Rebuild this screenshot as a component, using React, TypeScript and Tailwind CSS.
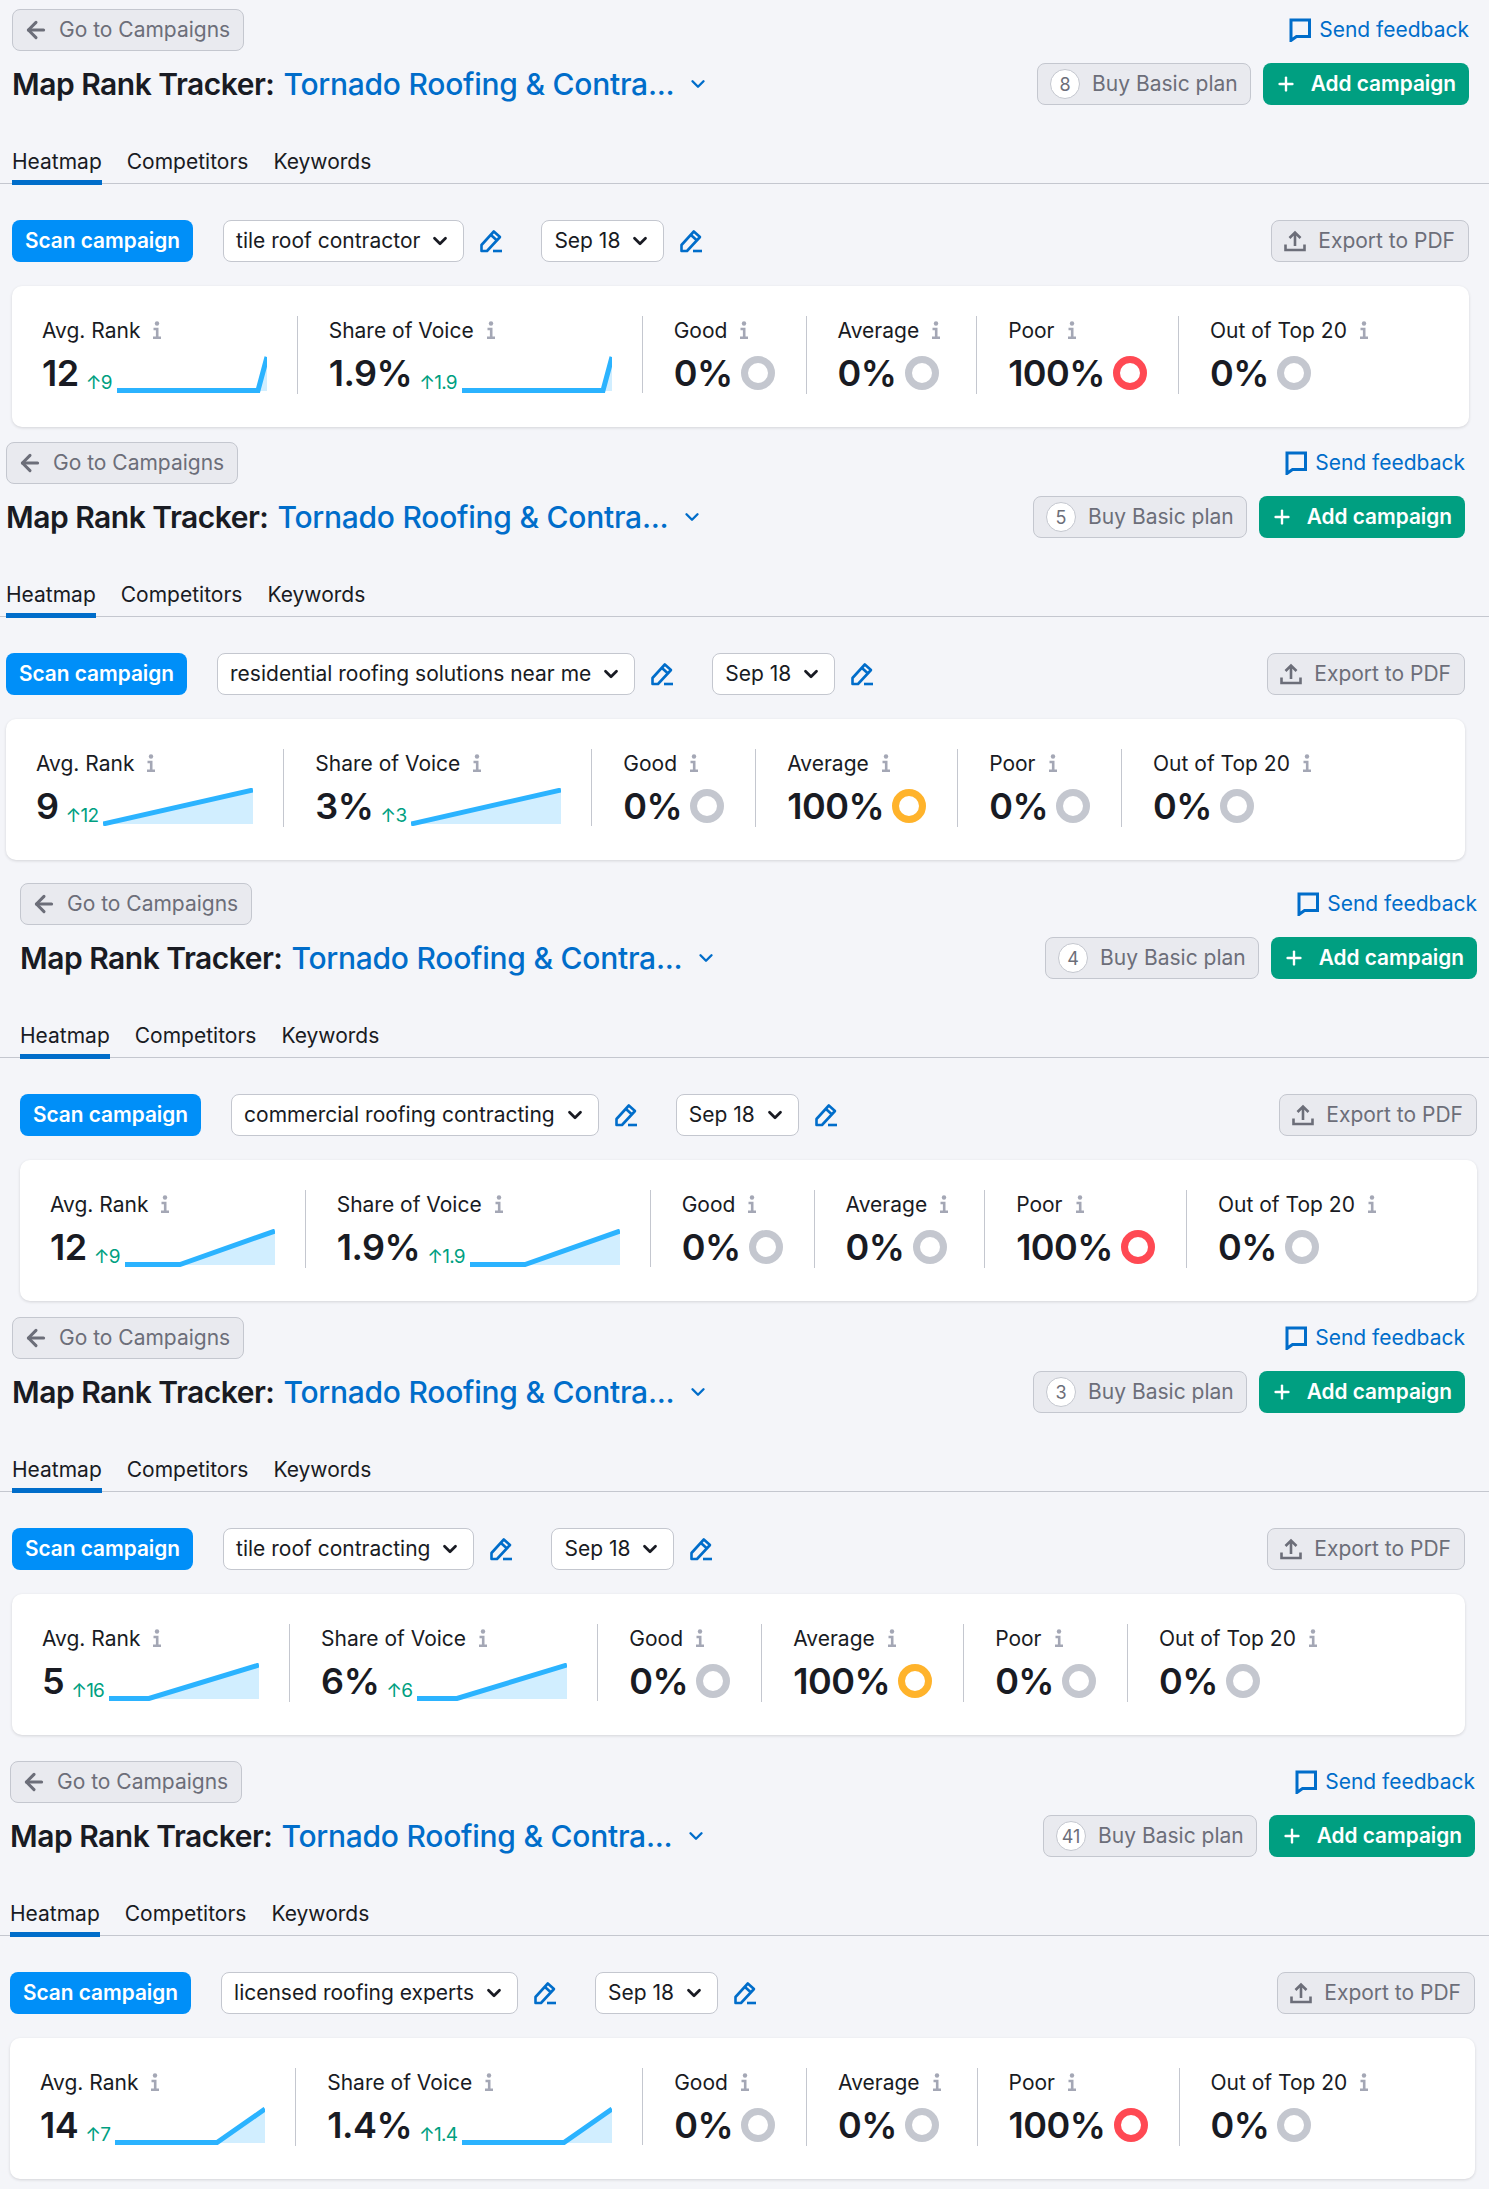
import { ArrowLeft, ChevronDown, Plus } from "lucide-react"

type Metric = { label: string; value: string; tone: "grey" | "red" | "orange" }

type Section = {
  gap: string
  row: string
  tail: string
  count: string
  keyword: string
  rank: string
  rankDelta: string
  share: string
  shareDelta: string
  flatTo: number
  metrics: Metric[]
}

const poorMetrics: Metric[] = [
  { label: "Good", value: "0%", tone: "grey" },
  { label: "Average", value: "0%", tone: "grey" },
  { label: "Poor", value: "100%", tone: "red" },
  { label: "Out of Top 20", value: "0%", tone: "grey" },
]

const averageMetrics: Metric[] = [
  { label: "Good", value: "0%", tone: "grey" },
  { label: "Average", value: "100%", tone: "orange" },
  { label: "Poor", value: "0%", tone: "grey" },
  { label: "Out of Top 20", value: "0%", tone: "grey" },
]

const sections: Section[] = [
  { gap: "pt-[9px]", row: "pl-[12px] pr-[20px]", tail: "ml-[12px] mr-[20px]", count: "8", keyword: "tile roof contractor", rank: "12", rankDelta: "9", share: "1.9%", shareDelta: "1.9", flatTo: 141, metrics: poorMetrics },
  { gap: "pt-[15px]", row: "pl-[6px] pr-[24px]", tail: "ml-[6px] mr-[24px]", count: "5", keyword: "residential roofing solutions near me", rank: "9", rankDelta: "12", share: "3%", shareDelta: "3", flatTo: 0, metrics: averageMetrics },
  { gap: "pt-[23px]", row: "pl-[20px] pr-[12px]", tail: "ml-[20px] mr-[12px]", count: "4", keyword: "commercial roofing contracting", rank: "12", rankDelta: "9", share: "1.9%", shareDelta: "1.9", flatTo: 55, metrics: poorMetrics },
  { gap: "pt-[16px]", row: "pl-[12px] pr-[24px]", tail: "ml-[12px] mr-[24px]", count: "3", keyword: "tile roof contracting", rank: "5", rankDelta: "16", share: "6%", shareDelta: "6", flatTo: 40, metrics: averageMetrics },
  { gap: "pt-[26px]", row: "pl-[10px] pr-[14px]", tail: "ml-[10px] mr-[14px]", count: "41", keyword: "licensed roofing experts", rank: "14", rankDelta: "7", share: "1.4%", shareDelta: "1.4", flatTo: 102, metrics: poorMetrics },
]

function InfoIcon() {
  return (
    <svg width="10" height="19" viewBox="0 0 10 19" className="mr-[4px] shrink-0">
      <circle cx="5" cy="2.5" r="2.2" fill="#a4a7b5" />
      <path d="M1.5 8H5.2V16.5M1 16.8H9" fill="none" stroke="#a4a7b5" strokeWidth="2.6" />
    </svg>
  )
}

function PencilIcon() {
  return (
    <svg width="24" height="24" viewBox="0 0 24 24" fill="none" stroke="#006dca" strokeWidth="2.6">
      <path d="M2.5 22V16L14.8 2.5L21 8L8 22Z" strokeLinejoin="round" />
      <path d="M12 6L18 11.5" />
      <path d="M14 22H23" />
    </svg>
  )
}

function FeedbackIcon() {
  return (
    <svg width="22" height="24" viewBox="0 0 22 24" fill="none" stroke="#006dca" strokeWidth="3">
      <path d="M2 2H20.5V18.5H7.5L2 22.5Z" strokeLinejoin="miter" />
    </svg>
  )
}

function ExportIcon() {
  return (
    <svg width="22" height="22" viewBox="0 0 22 22" fill="none" stroke="#6c6e79" strokeWidth="2.6">
      <path d="M11 16V3M5.5 8L11 2.5L16.5 8" />
      <path d="M1.5 14.5V20H20.5V14.5" />
    </svg>
  )
}

function Sparkline({ flatTo }: { flatTo: number }) {
  const line = flatTo > 0 ? `0,35.5 ${flatTo},35.5 150,2` : "0,36 150,2"
  return (
    <svg width="150" height="38" viewBox="0 0 150 38" className="shrink-0">
      <polygon points={`${flatTo},36 150,2 150,36`} fill="#d1eeff" />
      <polyline points={line} fill="none" stroke="#2bb3ff" strokeWidth="5" />
    </svg>
  )
}

function MetricLabel({ label }: { label: string }) {
  return (
    <div className="flex h-[29px] items-center gap-[12px] text-[21px] leading-[28px] text-[#191b23]">
      {label}
      <InfoIcon />
    </div>
  )
}

function TrendCell({ label, value, delta, flatTo }: { label: string; value: string; delta: string; flatTo: number }) {
  return (
    <div className="border-r border-[#c4c7cf] pr-[30px]">
      <MetricLabel label={label} />
      <div className="mt-[10px] flex h-[38px] items-center">
        <span className="-mt-[2px] text-[36px] font-semibold leading-[38px] tracking-[-0.5px] text-[#191b23]">{value}</span>
        <span className="ml-[7px] mr-[5px] mt-[18px] text-[19px] leading-[20px] tracking-[-0.8px] text-[#009f81]">↑{delta}</span>
        <Sparkline flatTo={flatTo} />
      </div>
    </div>
  )
}

const ringColors = {
  grey: "border-[#c4c7cf]",
  red: "border-[#ff4953]",
  orange: "border-[#ffb32b]",
}

function RingCell({ metric, last }: { metric: Metric; last: boolean }) {
  return (
    <div className={last ? "pl-[31px]" : "border-r border-[#c4c7cf] px-[31px]"}>
      <MetricLabel label={metric.label} />
      <div className="mt-[10px] flex h-[38px] items-center gap-[8px]">
        <span className="-mt-[2px] text-[36px] font-semibold leading-[38px] tracking-[-0.5px] text-[#191b23]">{metric.value}</span>
        <span className={`-mt-[2px] h-[34px] w-[34px] rounded-full border-[7px] ${ringColors[metric.tone]}`} />
      </div>
    </div>
  )
}

function GreyButton({ children }: { children: React.ReactNode }) {
  return (
    <div className="flex h-[42px] items-center rounded-[8px] border border-[#c4c7cf] bg-[#e9eaef] text-[21px] text-[#6c6e79]">
      {children}
    </div>
  )
}

function Select({ text }: { text: string }) {
  return (
    <div className="flex h-[42px] items-center gap-[9px] rounded-[8px] border border-[#c4c7cf] bg-white pl-[12px] pr-[12px] text-[21px] text-[#191b23]">
      {text}
      <ChevronDown size={22} strokeWidth={3} />
    </div>
  )
}

function CampaignSection({ s }: { s: Section }) {
  return (
    <section className={s.gap}>
      <div className={`flex items-center justify-between ${s.row}`}>
        <GreyButton>
          <div className="flex items-center gap-[10px] pl-[10px] pr-[13px]">
            <ArrowLeft size={26} strokeWidth={2.8} />
            Go to Campaigns
          </div>
        </GreyButton>
        <div className="flex items-center gap-[8px] text-[21px] text-[#006dca]">
          <FeedbackIcon />
          Send feedback
        </div>
      </div>

      <div className={`mt-[12px] flex h-[42px] items-center justify-between ${s.row}`}>
        <div className="flex items-center text-[30px] font-semibold tracking-[-0.5px] text-[#191b23]">
          Map Rank Tracker:
          <span className="ml-[9px] font-medium tracking-[-0.25px] text-[#006dca]">Tornado Roofing &amp; Contra...</span>
          <ChevronDown size={22} strokeWidth={2.6} className="ml-[13px] text-[#006dca]" />
        </div>
        <div className="flex items-center gap-[12px]">
          <GreyButton>
            <div className="flex items-center gap-[12px] pl-[12px] pr-[12px]">
              <span className="flex h-[30px] w-[30px] items-center justify-center rounded-full border border-[#c4c7cf] bg-white text-[18px]">
                {s.count}
              </span>
              Buy Basic plan
            </div>
          </GreyButton>
          <div className="flex h-[42px] items-center gap-[14px] rounded-[8px] bg-[#009f81] pl-[12px] pr-[13px] text-[20.8px] font-semibold text-white">
            <Plus size={22} strokeWidth={2.6} />
            Add campaign
          </div>
        </div>
      </div>

      <div className={`mt-[28px] flex h-[51px] items-end gap-[25px] border-b border-[#c4c7cf] text-[21px] text-[#191b23] ${s.row}`}>
        <div className="-mb-[2px] h-[48px] border-b-[5px] border-[#006dca] pt-[9px]">Heatmap</div>
        <div className="h-[46px] pt-[9px]">Competitors</div>
        <div className="h-[46px] pt-[9px]">Keywords</div>
      </div>

      <div className={`mt-[36px] flex items-center ${s.row}`}>
        <div className="flex h-[42px] items-center rounded-[8px] bg-[#008ff8] px-[13px] text-[20.8px] font-semibold text-white">
          Scan campaign
        </div>
        <div className="ml-[30px]">
          <Select text={s.keyword} />
        </div>
        <div className="ml-[15px]">
          <PencilIcon />
        </div>
        <div className="ml-[38px]">
          <Select text="Sep 18" />
        </div>
        <div className="ml-[15px]">
          <PencilIcon />
        </div>
        <div className="ml-auto">
          <GreyButton>
            <div className="flex items-center gap-[12px] pl-[12px] pr-[13px]">
              <ExportIcon />
              Export to PDF
            </div>
          </GreyButton>
        </div>
      </div>

      <div className={`mt-[24px] flex h-[141px] rounded-[10px] bg-white pb-[33px] pl-[30px] pt-[30px] shadow-[0_1px_3px_rgba(25,27,35,0.15)] ${s.tail}`}>
        <TrendCell label="Avg. Rank" value={s.rank} delta={s.rankDelta} flatTo={s.flatTo} />
        <div className="ml-[31px]">
          <TrendCell label="Share of Voice" value={s.share} delta={s.shareDelta} flatTo={s.flatTo} />
        </div>
        {s.metrics.map((m, i) => (
          <RingCell key={m.label} metric={m} last={i === s.metrics.length - 1} />
        ))}
      </div>
    </section>
  )
}

export default function App() {
  return (
    <div className="min-h-screen bg-[#f4f5f9] font-['Inter',sans-serif]">
      {sections.map((s) => (
        <CampaignSection key={s.keyword} s={s} />
      ))}
    </div>
  )
}
